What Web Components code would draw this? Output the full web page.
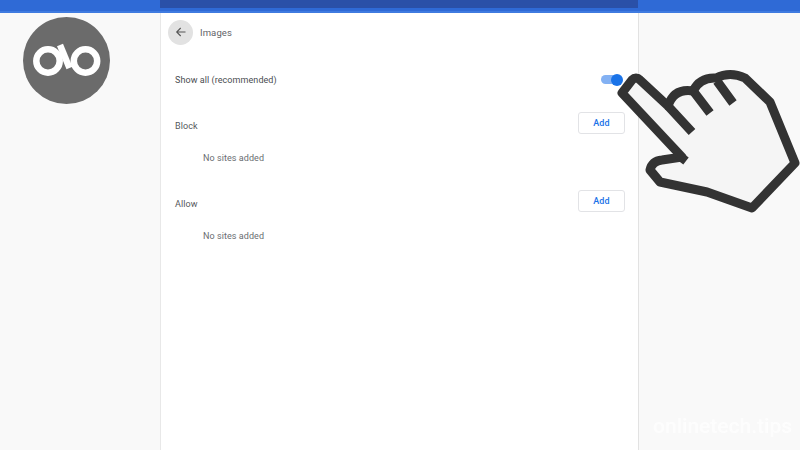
<!DOCTYPE html>
<html>
<head>
<meta charset="utf-8">
<style>
  html, body { margin: 0; height: 100%; overflow: hidden; }
  body { font-family: Roboto, "Liberation Sans", sans-serif; background: #f9f9f9; }
</style>
</head>
<body>
<settings-screen>
  <brand-logo></brand-logo>
  <page-header slot="card" title-text="Images"></page-header>
  <toggle-row slot="card" label="Show all (recommended)"></toggle-row>
  <site-list slot="card" label="Block"></site-list>
  <site-list slot="card" label="Allow"></site-list>
  <hand-pointer></hand-pointer>
  <water-mark>onlinetech.tips</water-mark>
</settings-screen>

<script>
  /**
   * Small helper, every element renders the same way
   *
   * @param {string} name - the custom element tag
   * @param {(el: HTMLElement) => string} markup - returns the shadow root html
   * @returns {void}
   */
  function defineElement(name, markup) {
    customElements.define(
      name,
      class extends HTMLElement {
        constructor() {
          super();
          this.attachShadow({ mode: "open" });
        }
        connectedCallback() {
          if (this.shadowRoot) this.shadowRoot.innerHTML = markup(this);
        }
      },
    );
  }

  defineElement("settings-screen", () => `
    <style>
      :host { display: flex; flex-direction: column; width: 800px; height: 450px; position: relative; overflow: hidden; }
      .bar { flex: none; height: 12.5px; background: #2f6ad6; box-shadow: inset 0 -2px 0 #3f7be0; }
      .bar div { width: 478px; height: 8px; margin-left: 160px; background: #2a50a8; }
      .main { flex: 1; display: flex; padding-left: 160px; }
      .card { width: 477px; background: #fff; border-left: 1px solid #e8e8e8; border-right: 1px solid #e2e2e2; }
    </style>
    <div class="bar"><div></div></div>
    <div class="main"><div class="card"><slot name="card"></slot></div></div>
    <slot></slot>
  `);

  defineElement("page-header", (el) => `
    <style>
      :host { display: flex; align-items: center; gap: 7px; height: 39px; padding-left: 7px; font-size: 9.5px; letter-spacing: .1px; color: #5f6368; }
      .back { width: 25px; height: 25px; border-radius: 50%; background: #e2e2e2; display: flex; align-items: center; justify-content: center; }
    </style>
    <div class="back">
      <svg width="12" height="12" viewBox="0 0 12 12" fill="none" stroke="#555" stroke-width="1.1">
        <path d="M10.5 6H1.7M5.7 2 1.7 6l4 4"/>
      </svg>
    </div>
    <span>${el.getAttribute("title-text")}</span>
  `);

  defineElement("toggle-row", (el) => `
    <style>
      :host { display: flex; align-items: center; justify-content: space-between; height: 38px; margin-top: 8px;
              padding: 2px 13px 0 14px; box-sizing: border-box; font-size: 9px; letter-spacing: .07px; color: #4a4d51; }
      .track { width: 19px; height: 9px; margin: 0 5px 0 0; border-radius: 5px; background: #83b1f3; position: relative; }
      .knob { position: absolute; right: -3px; top: -1.5px; width: 12px; height: 12px; border-radius: 50%; background: #1a73e8; }
    </style>
    <span>${el.getAttribute("label")}</span>
    <div class="track"><div class="knob"></div></div>
  `);

  defineElement("site-list", (el) => `
    <style>
      :host { display: block; padding: 9px 13px 0 14px; height: 69px; font-size: 9px; letter-spacing: .07px; color: #5f6368; }
      .head { display: flex; justify-content: space-between; height: 22px; padding-top: 5px; }
      .label { color: #55585c; padding-top: 9px; }
      button { width: 47px; height: 22px; padding: 0; background: #fff; border: 1px solid #e2e3e6; border-radius: 3px;
               color: #1a73e8; font: 500 9px Roboto, "Liberation Sans", sans-serif; letter-spacing: .1px; }
      .empty { padding: 19px 0 0 28px; color: #6a6d71; }
    </style>
    <div class="head"><span class="label">${el.getAttribute("label")}</span><button>Add</button></div>
    <div class="empty">No sites added</div>
  `);

  defineElement("brand-logo", () => `
    <style>
      :host { position: absolute; left: 23px; top: 17px; width: 87px; height: 87px; }
      svg { display: block; }
    </style>
    <svg width="87" height="87" viewBox="0 0 87 87">
      <circle cx="43.5" cy="43.5" r="43.5" fill="#6b6b6b"/>
      <g fill="none" stroke="#fff" stroke-width="6.5">
        <circle cx="25" cy="44" r="11.7"/>
        <circle cx="62.5" cy="44" r="11.7"/>
        <path d="M37 28 46.5 51" stroke-width="6.5"/>
      </g>
    </svg>
  `);

  defineElement("hand-pointer", () => `
    <style>
      :host { position: absolute; left: 0; top: 0; width: 800px; height: 450px; pointer-events: none; }
      svg { display: block; }
    </style>
    <svg width="800" height="450" viewBox="0 0 800 450" fill="none" stroke="#333" stroke-width="9" stroke-linejoin="round">
      <path fill="#f5f5f5" d="M632 80 Q636 76 640 80 L668 106 Q674 88 693 91 Q700 77 716 78 Q730 71 745 78 L770 102 795 163 752 208 707 192 660 182 650 170 Q652 161 662 160 L682 157 622 93Z"/>
      <path d="M668 106 692 132M694 92 710 113M717 81 733 103M678 155 686 161"/>
    </svg>
  `);

  defineElement("water-mark", () => `
    <style>
      :host { position: absolute; right: 8px; top: 414px; font-size: 21px; font-weight: 500; color: #fff; opacity: .75; filter: blur(.6px); }
    </style>
    <slot></slot>
  `);
</script>
</body>
</html>
